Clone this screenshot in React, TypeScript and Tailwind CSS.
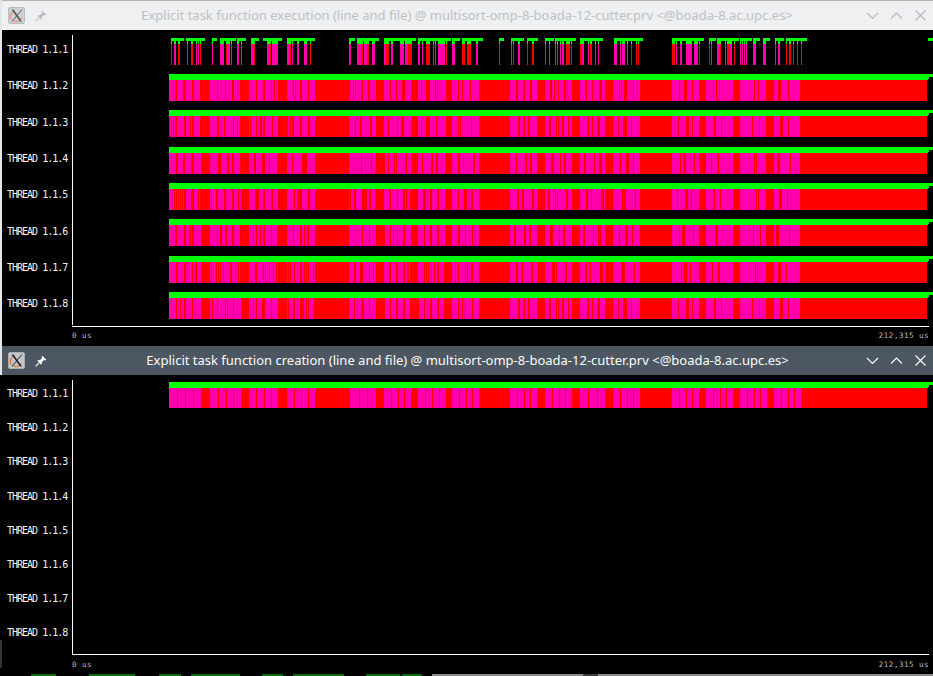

const RED = "#ff0000";
const MAG = "#ff00aa";
const GREEN = "#00ff00";

type Span = [number, number];
type Stem = [number, number, string];

const z = (list: number[]): Span[] => {
  const out: Span[] = [];
  for (let i = 0; i < list.length; i += 2) out.push([160 + list[i] / 3, 160 + list[i + 1] / 3]);
  return out;
};

const TAIL: Span[] = [
  [479, 510], [516, 518], [523, 525], [530, 532], [537, 545], [550, 552], [554, 555], [558, 559], [564, 566], [567, 568],
  [572, 580], [585, 587], [592, 593], [599, 602], [605, 613], [619, 620], [621, 622], [624, 627], [633, 634], [640, 672],
  [679, 680], [684, 687], [692, 693], [699, 706], [713, 714], [716, 717], [719, 720], [733, 740], [754, 755], [758, 759],
  [766, 774], [778, 781], [788, 789], [800, 927],
];

const MID: Span[] = [
  [361, 363], [368, 370], [376, 384], [390, 391], [396, 397], [402, 405], [411, 418], [421, 422], [426, 430], [435, 436],
  [437, 438], [446, 452], [458, 459], [462, 463], [470, 471],
];

const shift = (spans: Span[], row: number): Span[] =>
  spans.map(([a, b], i) => {
    if (b - a > 3) return [a, b] as Span;
    const d = ((row * 7 + i * 3) % 5) - 2;
    return [a + d, b + d] as Span;
  });

const ROW2 = [
  ...z([45, 51, 69, 78, 96, 102, 120, 150, 171, 174, 195, 198, 216, 222, 232, 234, 240, 267, 288, 291, 309, 315, 333, 336, 342, 345, 354, 381, 399, 402, 405, 408, 420, 426, 444, 447, 465, 570, 579, 582, 585, 588]),
  ...MID,
  ...TAIL,
];
const ROW3 = [
  ...z([27, 30, 33, 36, 39, 42, 45, 51, 72, 78, 90, 93, 96, 102, 120, 150, 171, 177, 183, 186, 192, 195, 219, 222, 231, 234, 240, 267, 270, 273, 288, 291, 300, 306, 309, 315, 336, 339, 354, 384, 390, 393, 396, 402, 420, 426, 444, 450, 465, 567, 585, 588]),
  ...shift(MID, 3),
  ...shift(TAIL, 3),
];
const Z6 = [45, 51, 72, 78, 87, 93, 96, 102, 123, 150, 171, 174, 180, 186, 195, 201, 216, 222, 240, 267, 279, 282, 288, 291, 300, 303, 309, 315, 333, 336, 351, 381, 399, 402, 420, 426, 432, 435, 441, 447, 465, 567, 606, 609, 627, 630, 648, 675, 690, 693, 699, 702, 711, 714, 729, 735, 753, 774, 792, 795, 810, 816, 831, 837, 855, 876, 894, 900, 915, 918, 936, 939, 945, 948];
const ROW4 = [...shift(z(Z6), 4), ...shift(TAIL, 4)];
const ROW5 = [
  ...z([42, 45, 48, 51, 54, 57, 60, 63, 66, 69, 72, 78, 93, 102, 114, 117, 120, 150, 153, 156, 168, 174, 192, 198, 216, 222, 234, 237, 243, 267, 285, 297, 309, 315, 333, 339, 354, 381, 402, 405, 411, 426, 444, 450, 465, 567, 570, 573, 582, 588, 606, 621, 627, 633, 645, 672, 687, 693, 711, 714, 729, 735, 738, 741, 750, 774, 789, 798, 801, 804, 810, 816, 831, 837, 855, 876, 894, 897, 912, 921, 927, 930, 933, 939]),
  ...shift(TAIL, 5),
];
const ROW6 = [...z(Z6), ...shift(TAIL, 6)];
const ROW7 = [
  ...z([48, 54, 72, 78, 81, 84, 96, 99, 105, 111, 123, 150, 153, 156, 168, 171, 174, 177, 180, 183, 189, 192, 210, 216, 225, 228, 234, 237, 240, 267, 285, 291, 309, 312, 315, 318, 327, 330, 339, 342, 348, 351, 354, 381, 384, 387, 390, 393, 402, 405, 420, 426, 432, 435, 438, 441, 444, 447, 459, 462, 465, 567, 582, 588, 600, 609, 627, 630, 639, 642, 648, 672, 687, 693, 708, 714, 729, 735, 741, 747, 750, 774, 792, 795, 798, 801, 804, 807, 813, 816, 822, 825, 831, 837, 852, 876, 885, 888, 894, 897, 915, 918, 921, 924, 933, 939]),
  ...shift(TAIL, 7),
];
const ROW8 = [
  ...z([48, 51, 60, 63, 72, 78, 96, 99, 105, 108, 123, 150, 156, 159, 171, 174, 195, 198, 201, 204, 219, 222, 243, 267, 279, 282, 288, 291, 306, 315, 333, 336, 354, 381, 384, 387, 399, 405, 411, 414, 420, 432, 438, 441, 444, 447, 462, 567, 582, 585, 591, 594, 603, 612, 627, 630, 648, 675, 690, 693, 708, 714, 729, 735, 750, 777, 792, 795, 810, 816, 831, 837, 852, 876, 894, 897, 906, 909, 915, 918, 936, 939]),
  ...shift(TAIL, 8),
];

const BIG: Span[] = [[201, 210], [241, 249], [278, 287], [315, 350], [376, 384], [411, 418], [446, 452], [479, 510], [537, 545], [572, 580], [605, 613], [640, 672], [699, 706], [733, 740], [767, 774], [801, 927]];
const CREATION: Span[] = (() => {
  const out: Span[] = [];
  let start = 169;
  BIG.forEach(([a, b]) => {
    const n = Math.round((a - start) / 7.6);
    for (let i = 1; i < n; i++) {
      const x = Math.round(start + (i * (a - start)) / n);
      out.push([x, x + 1]);
    }
    out.push([a, b]);
    start = b;
  });
  return out;
})();

const SPANS: Span[] = [
  [171, 184], [186, 205], [212, 217], [220, 236], [237, 246], [251, 259], [263, 282], [287, 315],
  [349, 355], [357, 379], [384, 416], [418, 451], [452, 460], [462, 483], [499, 504], [511, 524],
  [527, 538], [545, 554], [555, 576], [580, 603], [614, 643], [672, 704], [709, 716], [717, 739],
  [740, 752], [753, 760], [763, 770], [775, 784], [786, 807], [928, 933],
];
const STEMS: Stem[] = [
  [171, 1, RED], [174, 2, MAG], [178, 2, RED], [187, 1, MAG], [191, 2, RED], [196, 1, MAG], [198, 1, MAG], [200, 1, RED],
  [212, 1, MAG], [220, 4, MAG], [226, 1, RED], [227, 3, MAG], [231, 1, MAG], [237, 2, MAG], [241, 1, MAG], [251, 3, MAG], [254, 1, RED],
  [267, 3, MAG], [270, 1, RED], [272, 6, MAG], [287, 3, MAG], [290, 1, RED], [292, 1, MAG], [297, 2, MAG], [304, 3, MAG], [310, 1, RED],
  [349, 2, MAG], [357, 4, MAG], [361, 2, RED], [364, 3, MAG], [367, 2, RED], [372, 3, MAG], [384, 2, MAG], [386, 3, RED], [391, 2, MAG],
  [400, 4, MAG], [405, 3, MAG], [408, 4, RED], [418, 2, MAG], [422, 1, MAG], [426, 4, RED], [433, 1, MAG], [435, 1, MAG], [438, 7, MAG], [446, 1, RED],
  [452, 3, MAG], [462, 3, RED], [467, 4, RED], [476, 2, MAG], [499, 1, RED], [511, 1, MAG], [513, 1, RED], [518, 2, MAG], [527, 1, RED], [532, 2, RED],
  [545, 1, MAG], [549, 1, MAG], [555, 1, MAG], [557, 1, MAG], [560, 1, MAG], [562, 2, MAG], [566, 4, RED], [571, 1, RED],
  [580, 2, RED], [582, 2, MAG], [588, 1, MAG], [590, 2, RED], [595, 1, MAG], [598, 1, MAG],
  [614, 3, MAG], [620, 1, MAG], [622, 3, MAG], [627, 1, MAG], [631, 1, RED], [636, 1, RED], [638, 1, RED],
  [672, 3, RED], [676, 1, MAG], [680, 2, MAG], [686, 6, MAG], [694, 4, MAG], [699, 1, RED], [709, 1, RED], [711, 1, MAG],
  [717, 3, MAG], [720, 1, RED], [725, 1, MAG], [727, 3, RED], [730, 2, MAG], [734, 1, RED],
  [740, 1, MAG], [742, 1, MAG], [744, 1, MAG], [746, 1, MAG], [753, 3, MAG], [763, 3, MAG], [775, 1, MAG], [778, 2, MAG],
  [786, 1, RED], [789, 2, RED], [793, 1, RED], [797, 1, RED], [801, 1, RED],
];

function Bars({ spans, height }: { spans: Span[]; height: number }) {
  return (
    <svg width={860} height={height + 6} viewBox={`73 0 860 ${height + 6}`} shapeRendering="crispEdges" className="block shrink-0">
      <rect x={169} y={0} width={764} height={3} fill={GREEN} />
      <rect x={169} y={3} width={759} height={3} fill={GREEN} />
      <rect x={928} y={3} width={1} height={2} fill={GREEN} />
      <rect x={169} y={6} width={758} height={height} fill={MAG} />
      {spans.map(([a, b], i) => (
        <rect key={i} x={a} y={6} width={b - a} height={height} fill={RED} />
      ))}
    </svg>
  );
}

function Stems() {
  return (
    <svg width={860} height={27} viewBox="73 0 860 27" shapeRendering="crispEdges" className="block shrink-0">
      {SPANS.map(([a, b], i) => (
        <rect key={i} x={a} y={0} width={b - a} height={3} fill={GREEN} />
      ))}
      {STEMS.map(([x, w, c], i) => (
        <g key={i}>
          <rect x={x} y={3} width={w} height={3} fill={GREEN} />
          <rect x={x} y={6} width={w} height={21} fill={c} />
        </g>
      ))}
    </svg>
  );
}

function Row({ n, h, offset, labelOffset, children }: { n: number; h: string; offset: string; labelOffset: string; children?: React.ReactNode }) {
  return (
    <div className={`flex ${h}`}>
      <div className={`w-[70px] shrink-0 pl-[5px] ${labelOffset} text-[10px] leading-[12px] tracking-[-1px] whitespace-pre text-[#f2f2f2] [font-family:'DejaVu_Sans_Mono',monospace]`}>
        {`THREAD 1.1.${n}`}
      </div>
      <div className={`border-l border-white w-[861px] ${offset}`}>{children}</div>
    </div>
  );
}

function AppIcon({ dim }: { dim: boolean }) {
  return (
    <svg width="17" height="17" viewBox="0 0 17 17" className="block shrink-0" opacity={dim ? 0.75 : 1}>
      <rect x="0.5" y="0.5" width="16" height="16" rx="1.5" fill="#c4c8ca" stroke="#a8adb0" />
      <path d="M3 12.5a6 6 0 0 1 3.5-8.5" fill="none" stroke="#e2703a" strokeWidth="1.3" />
      <path d="M6 14.2a6 6 0 0 0 7.4-3.2" fill="none" stroke="#e2703a" strokeWidth="1.3" />
      <path d="M3.5 2.5 L12 14.5 H14 L5.5 2.5 Z" fill="#20262b" />
      <path d="M13.5 2.5 L3.5 14.5 H4.6 L14.4 2.5 Z" fill="#20262b" />
    </svg>
  );
}

function PinIcon({ color }: { color: string }) {
  return (
    <svg width="12" height="12" viewBox="0 0 12 12" className="block shrink-0">
      <path d="M7.3 0.7 L11.3 4.7 L10.2 5.4 L9 4.9 L6.8 7.2 L6.9 8.9 L5.9 9.6 L2.4 6.1 L3.1 5.1 L4.8 5.2 L7.1 3 L6.6 1.8 Z" fill={color} />
      <path d="M3.8 8.2 L0.6 11.4" stroke={color} strokeWidth="1.2" fill="none" />
    </svg>
  );
}

function Controls({ color }: { color: string }) {
  const props = { width: 13, height: 13, viewBox: "0 0 13 13", fill: "none", stroke: color, strokeWidth: 1.15, className: "block shrink-0" };
  return (
    <div className="flex w-[73px] shrink-0 items-center gap-[11px] pl-[6px]">
      <svg {...props}><path d="M1 4 L6.5 9.5 L12 4" /></svg>
      <svg {...props}><path d="M1 9.5 L6.5 4 L12 9.5" /></svg>
      <svg {...props}><path d="M1.5 1.5 L11.5 11.5 M11.5 1.5 L1.5 11.5" /></svg>
    </div>
  );
}

const SANS = "[font-family:'Noto_Sans',sans-serif]";

function Axis({ mt, pt }: { mt: string; pt: string }) {
  return (
    <div className="flex">
      <div className="w-[70px] shrink-0" />
      <div className={`w-[857px] border-t border-white ${pt} ${mt} flex justify-between text-[7.5px] leading-[10px] tracking-[0.5px] text-[#b4bcc4] [font-family:'DejaVu_Sans_Mono',monospace]`}>
        <span>0 us</span>
        <span>212,315 us</span>
      </div>
    </div>
  );
}

export default function App() {
  const rows = [ROW2, ROW3, ROW4, ROW5, ROW6, ROW7, ROW8];
  const greens: Span[] = [[31, 56], [89, 135], [159, 181], [191, 240], [262, 283], [293, 344], [366, 400], [402, 422]];
  return (
    <div className="flex h-[676px] w-[933px] overflow-hidden bg-black">
      <div className="flex w-[2px] shrink-0 flex-col">
        <div className="h-[375px] bg-[#e4e6e7]" />
        <div className="h-[265px] bg-black" />
        <div className="h-[28px] bg-[#333333]" />
      </div>
      <div className="flex w-[931px] flex-col">
        <section className="h-[346px] shrink-0">
          <header className={`flex h-[30px] items-center border-t border-[#b4b4b4] bg-[#eff0f1] text-[#bcc1c5] ${SANS}`}>
            <div className="flex w-[73px] shrink-0 items-center gap-[10px] pl-[6px]">
              <AppIcon dim />
              <PinIcon color="#b9bdc0" />
            </div>
            <div className="flex-1 whitespace-nowrap pb-[2px] pr-[1px] text-center text-[13px] leading-[18px]">
              Explicit task function execution (line and file) @ multisort-omp-8-boada-12-cutter.prv &lt;@boada-8.ac.upc.es&gt;
            </div>
            <Controls color="#b4b9bc" />
          </header>
          <div className="pt-[4.6px]">
            <Row n={1} h="h-[36.33px]" offset="pt-[3px]" labelOffset="pt-[9.5px]"><Stems /></Row>
            {rows.map((spans, i) => (
              <Row key={i} n={i + 2} h="h-[36.33px]" offset="pt-[3px]" labelOffset="pt-[9.5px]"><Bars spans={spans} height={21} /></Row>
            ))}
            <Axis mt="mt-[0.8px]" pt="pt-[4px]" />
          </div>
        </section>
        <section className="h-[328px] shrink-0">
          <header className={`flex h-[29px] items-center bg-[#4d5761] text-[#fcfcfc] ${SANS}`}>
            <div className="flex w-[73px] shrink-0 items-center gap-[10px] pl-[6px]">
              <AppIcon dim={false} />
              <PinIcon color="#fcfcfc" />
            </div>
            <div className="flex-1 whitespace-nowrap pb-[2px] text-center text-[13px] leading-[18px]">
              Explicit task function creation (line and file) @ multisort-omp-8-boada-12-cutter.prv &lt;@boada-8.ac.upc.es&gt;
            </div>
            <Controls color="#fcfcfc" />
          </header>
          <div className="pt-[5px]">
            <Row n={1} h="h-[34.2px]" offset="pt-[2px]" labelOffset="pt-[8px]"><Bars spans={CREATION} height={20} /></Row>
            {[2, 3, 4, 5, 6, 7, 8].map((n) => (
              <Row key={n} n={n} h="h-[34.2px]" offset="" labelOffset="pt-[8px]" />
            ))}
            <Axis mt="mt-[0.4px]" pt="pt-[5px]" />
          </div>
        </section>
        <div className="mt-auto flex h-[2px] shrink-0 items-stretch">
          {greens.map(([a, b], i) => (
            <div key={i} style={{ marginLeft: a - (i ? greens[i - 1][1] : 2), width: b - a }} className="bg-[#0c6b0c]" />
          ))}
          <div className="ml-[10px] flex flex-1 bg-[#8c8c8c]">
            <div className="ml-[151px] w-[15px] bg-[#3c3c3c]" />
          </div>
        </div>
      </div>
    </div>
  );
}
